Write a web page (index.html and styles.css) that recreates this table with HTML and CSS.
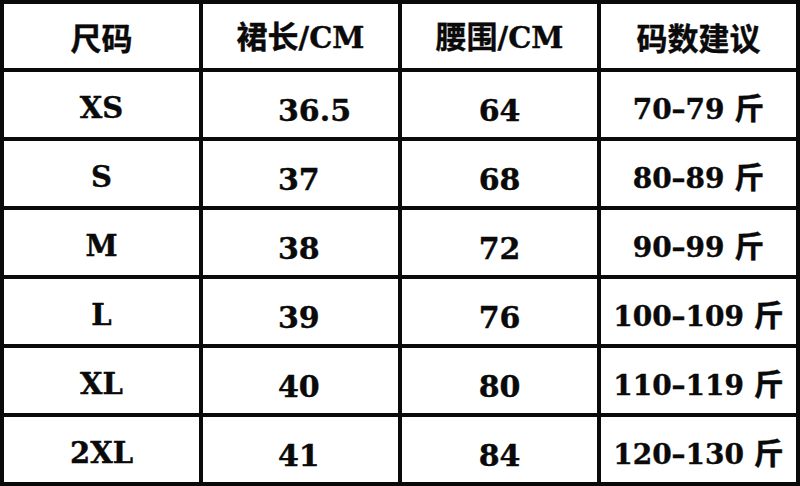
FILE: index.html
```html
<!DOCTYPE html>
<html lang="zh">
<head>
<meta charset="utf-8">
<link rel="stylesheet" href="styles.css">
</head>
<body>
<div class="table">
  <div class="cell head"><span>尺码</span></div>
  <div class="cell head"><span>裙长<span class="lat">/CM</span></span></div>
  <div class="cell head"><span>腰围<span class="lat">/CM</span></span></div>
  <div class="cell head"><span>码数建议</span></div>

  <div class="cell size"><span>XS</span></div>
  <div class="cell len"><span>36.5</span></div>
  <div class="cell waist"><span>64</span></div>
  <div class="cell rec"><span>70–79 <span class="cjk">斤</span></span></div>

  <div class="cell size"><span>S</span></div>
  <div class="cell len"><span>37</span></div>
  <div class="cell waist"><span>68</span></div>
  <div class="cell rec"><span>80–89 <span class="cjk">斤</span></span></div>

  <div class="cell size"><span>M</span></div>
  <div class="cell len"><span>38</span></div>
  <div class="cell waist"><span>72</span></div>
  <div class="cell rec"><span>90–99 <span class="cjk">斤</span></span></div>

  <div class="cell size"><span>L</span></div>
  <div class="cell len"><span>39</span></div>
  <div class="cell waist"><span>76</span></div>
  <div class="cell rec"><span>100–109 <span class="cjk">斤</span></span></div>

  <div class="cell size"><span>XL</span></div>
  <div class="cell len"><span>40</span></div>
  <div class="cell waist"><span>80</span></div>
  <div class="cell rec"><span>110–119 <span class="cjk">斤</span></span></div>

  <div class="cell size"><span>2XL</span></div>
  <div class="cell len"><span>41</span></div>
  <div class="cell waist"><span>84</span></div>
  <div class="cell rec"><span>120–130 <span class="cjk">斤</span></span></div>
</div>
</body>
</html>
```

FILE: styles.css
```css
html, body {
  margin: 0;
  padding: 0;
  background: #fff;
}

.table {
  width: 800px;
  height: 486px;
  box-sizing: border-box;
  display: grid;
  grid-template-columns: repeat(4, 195px);
  grid-template-rows: 64px repeat(6, 65px);
  gap: 4px;
  padding: 4px;
  background: #0a0a0a;
}

.cell {
  background: #fff;
  display: flex;
  align-items: center;
  justify-content: center;
  color: #0a0a0a;
  font-family: "DejaVu Serif", "Noto Sans CJK SC", serif;
  font-weight: bold;
  font-size: 29px;
  line-height: 1;
  white-space: nowrap;
  -webkit-text-stroke: 0.4px #0a0a0a;
}

.head {
  font-family: "Noto Sans CJK SC", sans-serif;
  font-size: 31px;
  font-weight: 700;
}

.lat {
  font-family: "DejaVu Serif", serif;
  font-weight: bold;
  font-size: 29px;
}

.cjk {
  font-family: "Noto Sans CJK SC", sans-serif;
  font-weight: 700;
  font-size: 30px;
}

.size {
  padding-top: 7px;
}

.len {
  justify-content: flex-start;
  padding-left: 75px;
  padding-top: 13px;
  font-size: 30px;
}

.waist {
  padding-top: 13px;
  font-size: 30px;
}

.rec {
  padding-top: 6px;
  font-size: 28px;
}
```
